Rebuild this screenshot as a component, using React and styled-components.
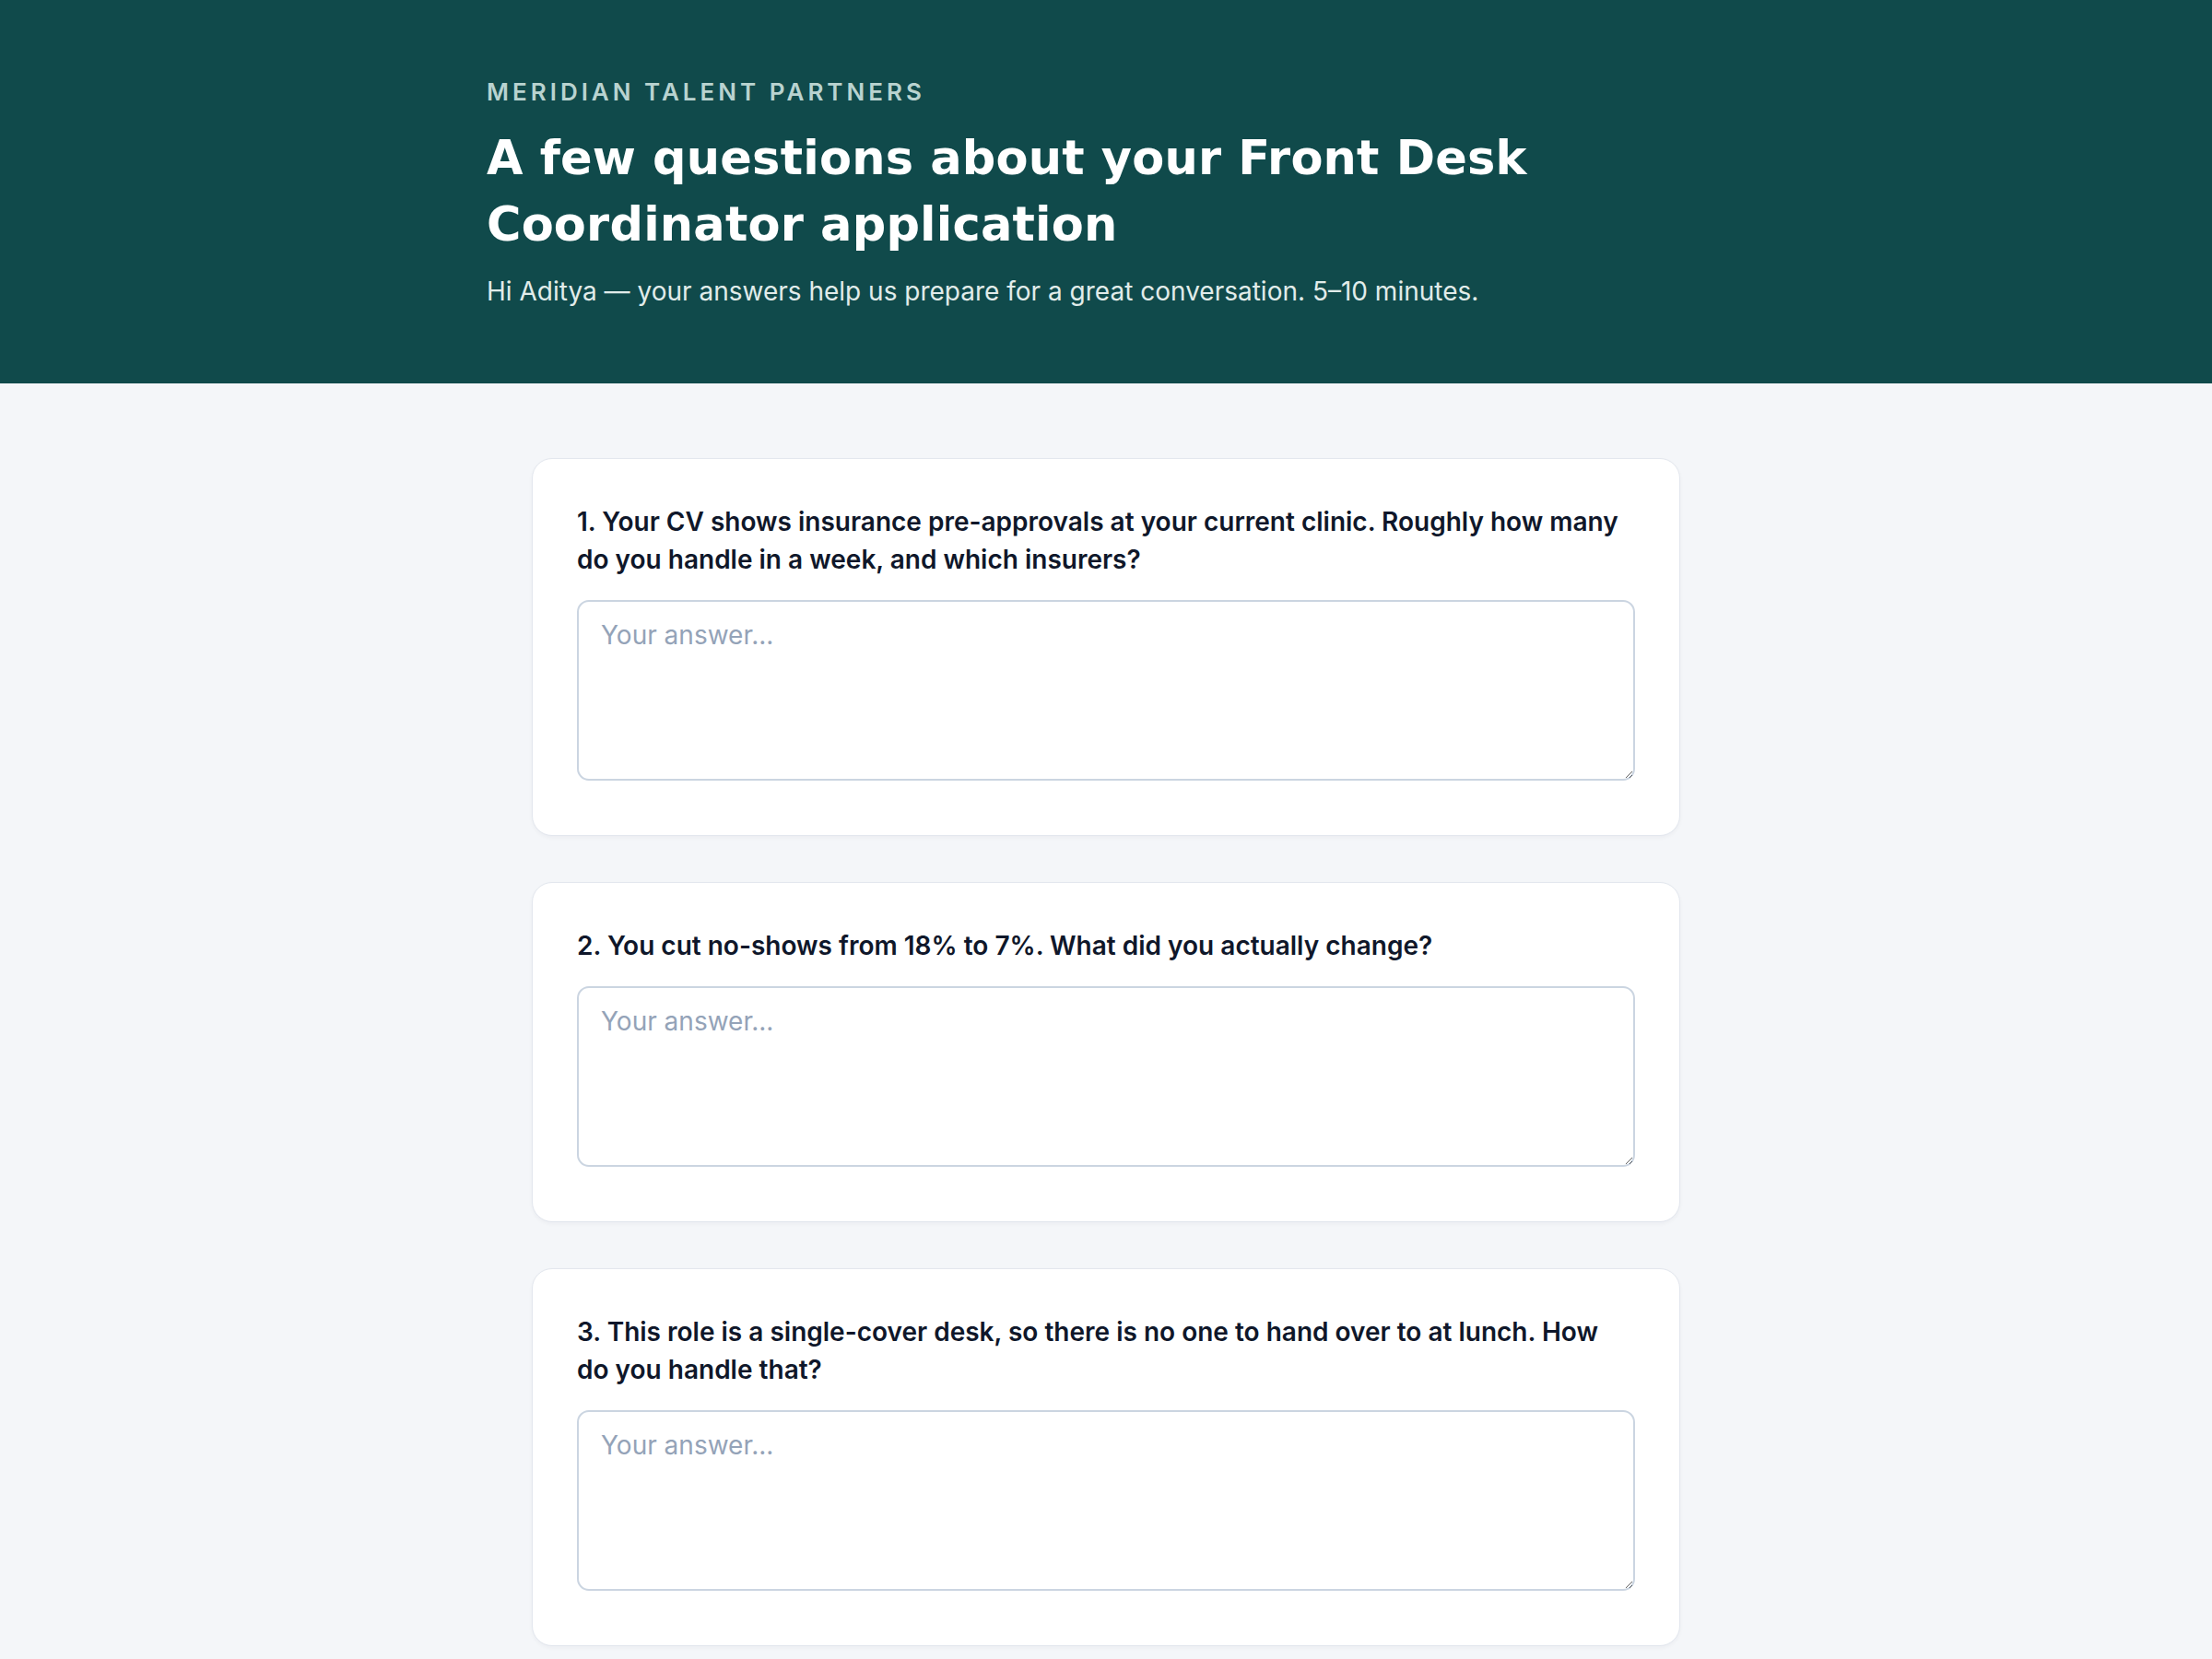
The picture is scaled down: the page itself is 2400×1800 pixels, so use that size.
import styled, { createGlobalStyle } from "styled-components";

const GlobalStyle = createGlobalStyle`
  * { box-sizing: border-box; }
  body {
    margin: 0;
    background: #f4f6f9;
    font-family: Inter, "Liberation Sans", sans-serif;
  }
`;

const questions = [
  "Your CV shows insurance pre-approvals at your current clinic. Roughly how many do you handle in a week, and which insurers?",
  "You cut no-shows from 18% to 7%. What did you actually change?",
  "This role is a single-cover desk, so there is no one to hand over to at lunch. How do you handle that?",
];

const App = () => {
  return (
    <>
      <GlobalStyle />
      <Header>
        <HeaderInner>
          <Eyebrow>Meridian Talent Partners</Eyebrow>
          <Title>A few questions about your Front Desk Coordinator application</Title>
          <Subtitle>Hi Aditya — your answers help us prepare for a great conversation. 5–10 minutes.</Subtitle>
        </HeaderInner>
      </Header>
      <Main>
        {questions.map((q, i) => (
          <Card key={i}>
            <Question>{i + 1}. {q}</Question>
            <Answer placeholder="Your answer..." />
          </Card>
        ))}
      </Main>
    </>
  );
};

const Header = styled.header`
  background: #104a4b;
  height: 416px;
  padding-top: 78px;
`;
const HeaderInner = styled.div`
  width: 1344px;
  margin: 0 auto;
`;
const Eyebrow = styled.div`
  font-size: 26px;
  line-height: 44px;
  font-weight: 600;
  letter-spacing: 4px;
  text-transform: uppercase;
  color: #b9d3d0;
`;
const Title = styled.h1`
  margin: 14px 0 0;
  font-family: "DejaVu Sans", Inter, sans-serif;
  font-size: 51px;
  line-height: 72px;
  font-weight: 700;
  color: #ffffff;
  letter-spacing: 0.2px;
`;
const Subtitle = styled.p`
  margin: 16px 0 0;
  font-size: 28px;
  line-height: 40px;
  color: #e1ecea;
`;
const Main = styled.main`
  width: 1246px;
  margin: 81px auto 0;
  display: flex;
  flex-direction: column;
  gap: 50px;
  padding-bottom: 60px;
`;
const Card = styled.section`
  background: #ffffff;
  border: 1px solid #e3e7ee;
  border-radius: 22px;
  box-shadow: 0 2px 4px rgba(15, 23, 42, 0.04);
  padding: 48px 48px 59px;
  display: flex;
  flex-direction: column;
  gap: 23px;
`;
const Question = styled.div`
  font-size: 28px;
  line-height: 41px;
  font-weight: 600;
  color: #0f172a;
`;
const Answer = styled.textarea`
  display: block;
  width: 100%;
  height: 196px;
  padding: 16px 24px 15px;
  border: 2px solid #cbd5e1;
  border-radius: 13px;
  font-family: Inter, "Liberation Sans", sans-serif;
  font-size: 28px;
  line-height: 40px;
  color: #0f172a;
  background: #ffffff;
  resize: vertical;
  outline: none;
  &::placeholder { color: #94a3b8; }
`;

export default App;
